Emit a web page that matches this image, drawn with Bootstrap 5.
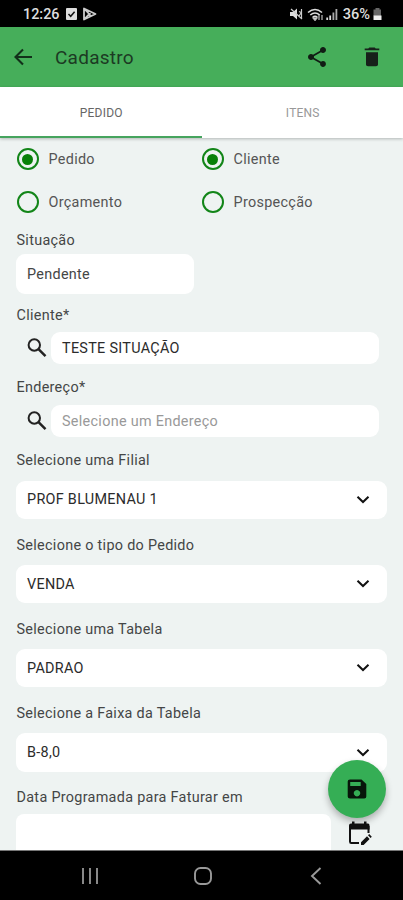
<!DOCTYPE html>
<html lang="pt-BR">
<head>
<meta charset="utf-8">
<meta name="viewport" content="width=device-width, initial-scale=1">
<title>Cadastro</title>
<link href="https://cdn.jsdelivr.net/npm/bootstrap@5.3.0/dist/css/bootstrap.min.css" rel="stylesheet">
<style>
body{font-family:Roboto,"Liberation Sans",sans-serif;font-size:14.4px;letter-spacing:.3px;color:#444646;background:#eef3f2;line-height:20px}
svg{display:block;flex:none}
.screen{height:900px}
.statusbar{height:27px;background:#000;color:#dedede;font-size:14.4px;padding:1px 21px 0 23px;letter-spacing:0}
.clock{padding-top:1px}
.pct{font-size:14.600px;letter-spacing:0;margin-left:5px;font-weight:500}
.appbar{height:60px;background:#46ae5a;color:#17321d;padding:0 19px 0 11px}
.app-title{font-size:19px;letter-spacing:.25px;color:#1c3a23;margin-left:20px;padding-top:1px}
.tabs{height:51px;box-shadow:0 1px 3px rgba(0,0,0,.25);font-size:12px;letter-spacing:.2px}
.tabs .tab{border-bottom:2.5px solid transparent;padding-top:2px;padding-left:1px;color:#999}
.tabs .tab.on{border-color:#46a45e;color:#666}
.opt{height:43px;gap:10px;padding-left:.5px;width:185px;color:#555}
.opt span{padding-top:2px}
.dot{width:22px;height:22px;border:2px solid #128518;border-radius:50%;padding:3.5px}
.dot.on::after{content:"";display:block;width:100%;height:100%;border-radius:50%;background:#088008}
.radios{height:86px;margin-top:-.5px;margin-bottom:.5px}
.form-area{padding:0 16px}
.cap{height:46px;padding-top:7.5px;padding-left:.5px}
.cap.c1{height:30px;padding-top:3px}
.cap.c2{height:38px;padding-top:5px}
.cap.c3{height:41.500px;padding-top:7px}
.cap.c4{height:44px;padding-top:5px}
.cap.c5{height:42px;padding-top:10px}
.box{height:38.3px;background:#fff;border-radius:9px;padding:1.6px 16px 0 11px}
.box svg{margin-top:-1.6px}
.box.sit{width:178px;height:40px}
.box.find{height:31.5px}
.box.date{height:40px;width:315px;border-radius:8px 8px 0 0}
.find-row{padding:0 8px 0 11px;gap:4px}
.dark{color:#2b2b2b}
.hint{color:#999}
.fab{width:58px;height:58px;left:328px;top:760px;background:#35ae55;box-shadow:0 4px 7px rgba(0,0,0,.28);z-index:2}
.navkeys{height:50px;background:#000;border-top:1px solid #777;z-index:3;padding-left:3px}
.navkeys span{width:113px}
</style>
</head>
<body>
<div class="screen position-relative overflow-hidden d-flex flex-column">
  <div class="statusbar d-flex align-items-center flex-shrink-0">
    <span class="clock fw-medium">12:26</span>
    <svg style="margin-left:6px" width="11" height="12" viewBox="0 0 11 12"><rect width="11" height="12" rx="1" fill="#ddd"/><path d="M2.5 6l2.2 2.3L8.6 3.8" fill="none" stroke="#111" stroke-width="1.5"/></svg>
    <svg style="margin-left:5px" width="15" height="14" viewBox="0 0 15 14"><path d="M2 1.5v11L13.5 7zM2 1.5l7.5 8M2 12.5l7.5-8" fill="none" stroke="#ccc" stroke-width="1.8" stroke-linejoin="round"/></svg>
    <svg class="ms-auto" width="13" height="12" viewBox="0 0 13 12"><path d="M0 4h3l4-3.5v11L3 8H0z" fill="#ddd"/><path d="M1 1l11 10M9 3.5l2 1M9 8l2-3M11.5 1v10" stroke="#ccc" stroke-width="1.2" fill="none"/></svg>
    <svg class="ms-1" width="17" height="13" viewBox="0 0 17 13"><path d="M1 4.5Q8 -1.5 15 4.5M3.3 7Q8 3 12.7 7M5.7 9.3Q8 7.3 10.3 9.3" fill="none" stroke="#ddd" stroke-width="1.6"/><path d="M8 12.500L6 10h4zM12 7v5M15 7v5" fill="#ddd" stroke="#bbb" stroke-width="1.2"/></svg>
    <svg style="margin-left:2px" width="12" height="12" viewBox="0 0 12 12"><path d="M1.2 12V9.5M4.2 12V7.5" stroke="#ddd" stroke-width="1.8"/><path d="M7.4 12V4.5M10.4 12V1" stroke="#aaa" stroke-width="1.8"/></svg>
    <span class="pct">36%</span>
    <svg style="margin-left:3px" width="9" height="12" viewBox="0 0 9 12"><path d="M2.5 0h4v1.5H8V8H.5V1.5h2z" fill="#666"/><path d="M.5 7.5H8.500V12H.5z" fill="#eee"/></svg>
  </div>
  <header class="appbar d-flex align-items-center flex-shrink-0">
    <svg width="24" height="24" viewBox="0 0 24 24"><path d="M21 12H5M12 4.500L4.500 12l7.500 7.500" fill="none" stroke="#12301a" stroke-width="2.1"/></svg>
    <span class="app-title">Cadastro</span>
    <svg class="ms-auto" width="24" height="24" viewBox="0 0 24 24" fill="#111c14"><path d="M18 16.080c-.76 0-1.440.3-1.960.77L8.910 12.700c.05-.23.090-.46.090-.7s-.040-.47-.090-.7l7.050-4.110c.54.5 1.250.81 2.040.81 1.660 0 3-1.340 3-3s-1.340-3-3-3-3 1.340-3 3c0 .24.040.47.090.7L8.040 9.810C7.500 9.310 6.790 9 6 9c-1.660 0-3 1.340-3 3s1.340 3 3 3c.79 0 1.500-.31 2.040-.81l7.120 4.160c-.05.21-.08.43-.08.65 0 1.610 1.310 2.920 2.920 2.920s2.920-1.310 2.920-2.920-1.310-2.920-2.920-2.920z"/></svg>
    <svg style="margin-left:31px" width="24" height="24" viewBox="0 0 24 24" fill="#17201a"><path d="M6 19.500c0 1 .9 1.700 2 1.700h8c1.100 0 2-.7 2-1.700V7.200H6zM19.300 3.500h-3.600l-1-.9H9.300l-1 .9H4.700v1.800h14.600z"/></svg>
  </header>
  <nav class="tabs d-flex bg-white flex-shrink-0 position-relative">
    <div class="tab on w-50 d-flex align-items-center justify-content-center"><span>PEDIDO</span></div>
    <div class="tab w-50 d-flex align-items-center justify-content-center"><span>ITENS</span></div>
  </nav>
  <main class="form-area flex-grow-1 overflow-hidden">
    <div class="radios">
      <div class="d-flex">
        <div class="opt d-flex align-items-center"><i class="dot on"></i><span>Pedido</span></div>
        <div class="opt d-flex align-items-center"><i class="dot on"></i><span>Cliente</span></div>
      </div>
      <div class="d-flex">
        <div class="opt d-flex align-items-center"><i class="dot"></i><span>Orçamento</span></div>
        <div class="opt d-flex align-items-center"><i class="dot"></i><span>Prospecção</span></div>
      </div>
    </div>
    <div class="cap c1 d-flex align-items-center">Situação</div>
    <div class="box sit d-flex align-items-center">Pendente</div>
    <div class="cap c2 d-flex align-items-center">Cliente*</div>
    <div class="find-row d-flex align-items-center">
      <svg width="20" height="20" viewBox="0 0 20 20"><circle cx="7.300" cy="7" r="5.700" fill="none" stroke="#222" stroke-width="2"/><path d="M11.500 11.200l7 7" stroke="#222" stroke-width="2.400"/></svg>
      <div class="box find dark flex-grow-1 d-flex align-items-center">TESTE SITUAÇÃO</div>
    </div>
    <div class="cap c3 d-flex align-items-center">Endereço*</div>
    <div class="find-row d-flex align-items-center">
      <svg width="20" height="20" viewBox="0 0 20 20"><circle cx="7.300" cy="7" r="5.700" fill="none" stroke="#222" stroke-width="2"/><path d="M11.500 11.200l7 7" stroke="#222" stroke-width="2.400"/></svg>
      <div class="box find hint flex-grow-1 d-flex align-items-center">Selecione um Endereço</div>
    </div>
    <div class="cap c4 d-flex align-items-center">Selecione uma Filial</div>
    <div class="box dark d-flex align-items-center justify-content-between"><span>PROF BLUMENAU 1</span><svg width="16" height="12" viewBox="0 0 16 12"><path d="M2.500 2.700L8 8l5.500-5.300" fill="none" stroke="#111" stroke-width="2"/></svg></div>
    <div class="cap d-flex align-items-center">Selecione o tipo do Pedido</div>
    <div class="box dark d-flex align-items-center justify-content-between"><span>VENDA</span><svg width="16" height="12" viewBox="0 0 16 12"><path d="M2.500 2.700L8 8l5.500-5.300" fill="none" stroke="#111" stroke-width="2"/></svg></div>
    <div class="cap d-flex align-items-center">Selecione uma Tabela</div>
    <div class="box dark d-flex align-items-center justify-content-between"><span>PADRAO</span><svg width="16" height="12" viewBox="0 0 16 12"><path d="M2.500 2.700L8 8l5.500-5.300" fill="none" stroke="#111" stroke-width="2"/></svg></div>
    <div class="cap d-flex align-items-center">Selecione a Faixa da Tabela</div>
    <div class="box dark d-flex align-items-center justify-content-between"><span>B-8,0</span><svg width="16" height="12" viewBox="0 0 16 12"><path d="M2.500 2.700L8 8l5.500-5.300" fill="none" stroke="#111" stroke-width="2"/></svg></div>
    <div class="cap c5 d-flex align-items-center">Data Programada para Faturar em</div>
    <div class="d-flex">
      <div class="box date"></div>
      <svg style="margin:7px 0 0 17px" width="24" height="25" viewBox="0 0 24 25"><path d="M11 22H3.200Q2 22 2 20.500V5.500M20.500 5v7" fill="none" stroke="#111" stroke-width="2"/><path d="M1 4.500Q1 2.500 3 2.500h1V.5h2.500v2H16V.5h2.500v2H20q1.500 0 1.500 2V8.500H1z" fill="#111"/><path d="M13 24v-2.700l6-6 2.600 2.600-6 6.100zM20 14.300l1.200-1.200 2.600 2.600-1.200 1.200z" fill="#111"/></svg>
    </div>
  </main>
  <button class="fab btn rounded-circle border-0 p-0 position-absolute d-flex align-items-center justify-content-center" aria-label="Salvar">
    <svg width="20" height="20" viewBox="0 0 20 20"><path fill-rule="evenodd" d="M3 .5h11.500L19.300 5v12.500q0 2-2 2H3q-2.300 0-2.300-2v-15Q.7.5 3 .5zM3.200 3v4h10.500V3zM10 11a3.200 3.200 0 1 0 .01 0z" fill="#07150a"/></svg>
  </button>
  <footer class="navkeys d-flex align-items-center justify-content-center flex-shrink-0 position-relative">
    <span class="d-flex justify-content-center"><svg width="18" height="18" viewBox="0 0 18 18"><path d="M2 1v16M9 1v16M16 1v16" stroke="#888" stroke-width="2"/></svg></span>
    <span class="d-flex justify-content-center"><svg width="18" height="18" viewBox="0 0 18 18"><rect x="1" y="1" width="16" height="16" rx="5.500" fill="none" stroke="#999" stroke-width="1.900"/></svg></span>
    <span class="d-flex justify-content-center"><svg width="12" height="18" viewBox="0 0 12 18"><path d="M10.500 1L2 9l8.500 8" fill="none" stroke="#999" stroke-width="1.900"/></svg></span>
  </footer>
</div>
<script src="https://cdn.jsdelivr.net/npm/bootstrap@5.3.0/dist/js/bootstrap.bundle.min.js"></script>
</body>
</html>
